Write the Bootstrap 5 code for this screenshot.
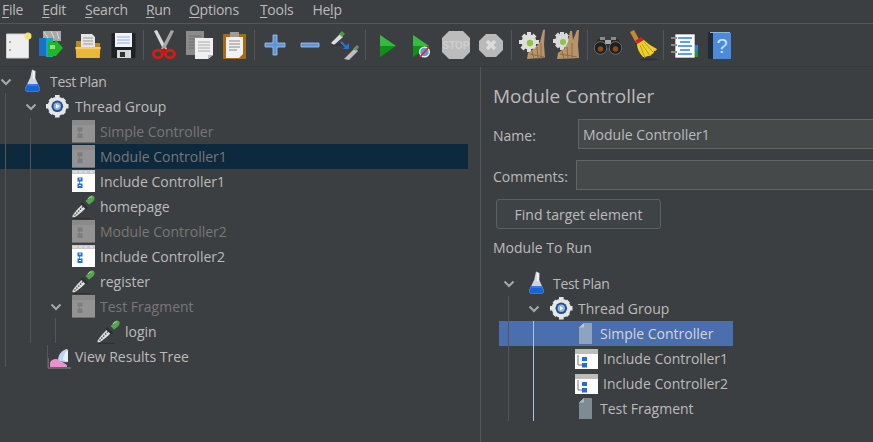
<!DOCTYPE html>
<html lang="en"><head><meta charset="utf-8"><title>JMeter</title>
<link href="https://cdn.jsdelivr.net/npm/bootstrap@5.3.0/dist/css/bootstrap.min.css" rel="stylesheet">
<style>
html,body{width:873px;height:442px;overflow:hidden;background:#3c3f41}
body{font-family:"Open Sans","Noto Sans",sans-serif;font-size:14px;color:#bbb;line-height:20px}
.menubar{height:24px;border-bottom:1px solid #555;padding-left:2px;padding-bottom:3px;font-size:14px;align-items:center;letter-spacing:-.25px}
.menubar span{margin-right:19px}
.menubar span.mid{margin-right:18px}
.menubar span.wide{margin-right:21px}
.menubar u{text-underline-offset:2px}
.toolrow{height:43px;align-items:center;border-bottom:1px solid #353739}
.tbtn{width:35px;height:32px;display:flex;align-items:center;justify-content:center}
.tbtn svg{width:32px;height:32px}
.tsep{width:6px;height:30px;display:flex;justify-content:center}
.tsep::before{content:"";width:1px;background:#555}
.mainarea{height:375px}
.leftpane{width:468px;padding-top:2px;position:relative}
.splitter{width:13px;border-right:1px solid #555}
.rightpane{width:392px;overflow:hidden;padding-left:12px;position:relative}
.trow{height:25px;display:flex;align-items:center;white-space:nowrap;letter-spacing:0;color:#bbb}
.trow.off{color:#777}
.trow.cur{background:#0d293e}
.trow.sel{background:#4b6eaf;color:#d6d6d6}
.squeeze{letter-spacing:-.3px}
.chev{width:12px;height:8px;flex:none}
.ticon{width:25px;height:25px;flex:none}
.gap-after{margin-right:4px}
.gline{position:absolute;width:1px;background:#555}
.gline.pale{background:#a9c4e8}
.paneltitle{font-size:19px;line-height:24px;margin-top:17px}
.fieldrow{display:flex;align-items:center}
.fieldrow label{flex:none;padding-top:3px}
.fieldbox{height:30px;flex:none;width:340px;background:#45494a;border:1px solid #646464;border-radius:0;color:#bbb;font-size:14px;padding:0 4px;box-shadow:none}
.fieldbox:focus{background:#45494a;color:#bbb;border-color:#646464;box-shadow:none}
.findbtn{width:165px;height:30px;margin-left:3px;background:#3e4345;border:1px solid #5e6060;border-radius:3px;color:#bbb;font-size:14px;padding:1px 0 0;line-height:28px}
.findbtn:hover{background:#3e4345;color:#bbb;border-color:#5e6060}
.righttree{position:relative;margin-left:6px;width:234px;margin-top:13px}
</style></head>
<body>
<svg width="0" height="0" class="position-absolute">
<defs>
<symbol id="i-flask" viewBox="0 0 25 25"><path d="M12 .5l3.500 1.500-.2 7 4.400 10c.7 1.900-.2 3.500-2 3.500H7.300c-1.800 0-2.700-1.600-2-3.500l5-10.500z" fill="#cfd6dd"/><path d="M12.800 1.500l2 .8-.2 8h-1.800z" fill="#f4f6f8"/><path d="M7.500 15h10l2.200 4.200c.7 1.900-.2 3.300-2 3.300H7.300c-1.800 0-2.700-1.400-2-3.300z" fill="#1565d8"/><path d="M8 16h9" stroke="#4f95ee"/></symbol>
<symbol id="i-gear" viewBox="0 0 25 25"><g fill="#e4e6e8"><circle cx="12.300" cy="12.300" r="9.500"/><path d="M10 1h4.600v5H10zM10 18.500h4.600v5H10zM1 10h5v4.600H1zM18.500 10h5v4.600h-5z"/><path d="M3.500 6.500l3-3 4 4-3 3zM18 3.500l3 3-4 4-3-3zM3.500 18l3 3 4-4-3-3zM21 18l-3 3-4-4 3-3z"/></g><circle cx="12.300" cy="12.300" r="5.800" fill="#23508f"/><circle cx="12.300" cy="12.300" r="3.700" fill="#8fb3dc"/><path d="M11 10l3.500 2.300L11 14.600z" fill="#fff"/></symbol>
<symbol id="i-ctl" viewBox="0 0 25 25"><rect x="1" y="1" width="23" height="22" fill="#fff"/><rect x="1" y="1" width="23" height="4" fill="#c9c9c9"/><path d="M2 3h4M8 3h3M13 3h3M19 3h3" stroke="#eee"/><path d="M8.500 10v8h2" fill="none" stroke="#8b8b8b"/><rect x="6.500" y="8.500" width="5" height="4" fill="#1f6fd6"/><rect x="6.500" y="14.500" width="5" height="4.500" fill="#1f6fd6"/><rect x="8" y="9.500" width="2" height="1" fill="#fff"/><rect x="8" y="16" width="2" height="1" fill="#fff"/></symbol>
<symbol id="i-ctl2" viewBox="0 0 25 25"><rect x="1" y="3" width="23" height="20" fill="#fff"/><rect x="1" y="3" width="23" height="5" fill="#bcbcbc"/><path d="M4 9v10h5" fill="none" stroke="#777"/><rect x="8" y="11" width="5" height="4" fill="#1f6fd6"/><rect x="8" y="17" width="5" height="4.500" fill="#1f6fd6"/></symbol>
<symbol id="i-ctl-off" viewBox="0 0 25 25"><rect x="1" y="1" width="23" height="22" fill="#939393"/><rect x="1" y="1" width="23" height="5" fill="#8a8a8a"/><path d="M1 23h23v1H1z" fill="#6e6e6e"/><path d="M8.500 10v8h2" fill="none" stroke="#808080"/><rect x="6.500" y="8.500" width="5" height="4" fill="#7c7c7c"/><rect x="6.500" y="14.500" width="5" height="4.500" fill="#7c7c7c"/></symbol>
<symbol id="i-drop" viewBox="0 0 25 25"><path d="M1.500 23c-.6-1.500 3-5.800 9.500-12.500l3.700 3.700C8 20.600 3 24.300 1.500 23z" fill="#dfe2e2"/><path d="M3.500 21.500L12 12.500" stroke="#444" stroke-width="1.300" stroke-dasharray="1.500 1.200"/><path d="M11 8l6 6-2 1.500-5.500-5.500z" fill="#2e2e2e"/><path d="M14.500 7c1.500-1 2-2.500 3.500-4 1.500-1.500 3.500-2 5-.8 1.200 1.400.6 3.500-.8 5-1.500 1.500-3 2-4 3.500z" fill="#58a44e"/><path d="M17 5c1-1.500 3-2.500 4-2" stroke="#a6d69e" fill="none"/><path d="M2 24.500h17" stroke="#2b2b2b" stroke-width="1.200" opacity=".7"/></symbol>
<symbol id="i-results" viewBox="0 0 25 25"><path d="M3 23v-4.500c1-2.500 4-4 6.500-3.500l4.500 2 6 4v2z" fill="#ee8fd0"/><path d="M11 16c0-5 4-10 9-11 1 .1 1 2 1 4v9c-3 .5-7-.3-10-2z" fill="#bcd4ef"/><path d="M16 16c0-4 2-8 5-10v12z" fill="#e6f0fa"/><path d="M1 24h23" stroke="#8a8a8a"/><path d="M1.500 14v10" stroke="#666"/></symbol>
<symbol id="i-file" viewBox="0 0 25 25"><path d="M4 6.500L9 2h8v21H4z" fill="#7f8b93"/><path d="M4 6.500h5V2z" fill="#aeb7bd"/></symbol>
<symbol id="i-file-sel" viewBox="0 0 25 25"><path d="M4 6.500L9 2h8v21H4z" fill="#8ea3bd"/><path d="M4 6.500h5V2z" fill="#b9c6d6"/></symbol>
<symbol id="t-new" viewBox="0 0 32 32"><rect x="4.500" y="5" width="22" height="24" fill="#efefef"/><path d="M4.500 5h22v24h-22z" fill="none" stroke="#ccc"/><circle cx="26" cy="7" r="3.500" fill="#f3e46b"/><circle cx="8" cy="13" r="1" fill="#999"/><circle cx="8" cy="21" r="1" fill="#999"/></symbol>
<symbol id="t-tpl" viewBox="0 0 32 32"><path d="M6 2h18v10H6z" fill="#a7a9ab"/><path d="M7 3l4 6M14 2l3 7M20 3l2 7" stroke="#ddd"/><path d="M2 9h9v18H2z" fill="#1b70c8"/><path d="M9 9h7v19H9z" fill="#12a9c5"/><path d="M11 13h7l1-2 7 8-7 8h-8z" fill="#22b626"/><path d="M13 16h5v4h-5z" fill="#8be08a"/></symbol>
<symbol id="t-open" viewBox="0 0 32 32"><path d="M4 12h7l2 2h15v15H4z" fill="#b98a1d"/><path d="M9 5h11l3 3v10H9z" fill="#e6e6e6"/><path d="M11 9h10M11 12h10M11 15h10" stroke="#999"/><path d="M3.500 18h25l-1 11h-23z" fill="#edb73a"/><path d="M3.500 18h25v2h-25z" fill="#f4cd6b"/></symbol>
<symbol id="t-save" viewBox="0 0 32 32"><path d="M4.500 4h24v25h-24z" fill="#1f2224"/><path d="M8 4h17v14H8z" fill="#f0f3f7"/><path d="M10 8h13M10 11h13M10 14h13" stroke="#8fb4dd"/><path d="M10 21h14v8H10z" fill="#d7d7d7"/><path d="M13 23h5v5h-5z" fill="#333"/></symbol>
<symbol id="t-cut" viewBox="0 0 32 32"><path d="M6 2l3-1 10 19-3 2z" fill="#d8d8d8"/><path d="M26 2l-3-1-10 19 3 2z" fill="#a5a5a5"/><ellipse cx="10" cy="25" rx="4.500" ry="3.800" fill="none" stroke="#d51a1a" stroke-width="3"/><ellipse cx="22" cy="25" rx="4.500" ry="3.800" fill="none" stroke="#d51a1a" stroke-width="3"/><path d="M13 21l3-2 3 2-3 3z" fill="#c11"/></symbol>
<symbol id="t-copy" viewBox="0 0 32 32"><path d="M3 2h18v24H3z" fill="#8b8b8b"/><path d="M6 7h12M6 10h12M6 13h5M6 16h5M6 19h5" stroke="#6f6f6f"/><path d="M12 9h18v17l-5 4H12z" fill="#efefef"/><path d="M15 13h12M15 16h12M15 19h12M15 22h12" stroke="#aaa"/><path d="M25 30v-4h5z" fill="#bbb"/></symbol>
<symbol id="t-paste" viewBox="0 0 32 32"><rect x="5" y="5" width="23" height="25" rx="1" fill="#a66a1d"/><path d="M8 8h17v17l-4 4H8z" fill="#f1f1f1"/><rect x="12" y="3" width="9" height="5" fill="#9d9d9d"/><path d="M11 12h11M11 15h11M11 18h11M11 21h8" stroke="#888"/></symbol>
<symbol id="t-plus" viewBox="0 0 32 32"><path d="M14 6h4v8h8v4h-8v8h-4v-8H6v-4h8z" fill="#5f95d8" stroke="#a7c8ef" stroke-width=".8"/></symbol>
<symbol id="t-minus" viewBox="0 0 32 32"><path d="M7 14h18v4H7z" fill="#5f95d8" stroke="#a7c8ef" stroke-width=".8"/></symbol>
<symbol id="t-toggle" viewBox="0 0 32 32"><path d="M2 14l9-9 3 3-9 8z" fill="#ddd"/><path d="M10 5l3-3 3 3-3 3z" fill="#4f9a4a"/><path d="M3 16h11" stroke="#222" opacity=".6"/><path d="M12 13l6 6" stroke="#2277dd" stroke-width="2"/><path d="M20 14v6h-6z" fill="#2277dd"/><path d="M15 30l11-11 3 3-9 9z" fill="#bfbfbf"/><path d="M24 20l4-4 2 2-3 4z" fill="#6d8f68"/></symbol>
<symbol id="t-start" viewBox="0 0 32 32"><path d="M10 6l16 11-16 11z" fill="#0a9414"/><path d="M10 6l16 11H10z" fill="#38b93f"/></symbol>
<symbol id="t-startn" viewBox="0 0 32 32"><path d="M8 6l16 11L8 28z" fill="#0a9414"/><path d="M8 6l16 11H8z" fill="#38b93f"/><circle cx="19.500" cy="23" r="5.500" fill="#fff"/><circle cx="19.500" cy="23" r="4.300" fill="#5a9be0"/><path d="M15 28l9-10" stroke="#e22" stroke-width="1.800"/></symbol>
<symbol id="t-stop" viewBox="0 0 32 32"><path d="M9 2h14l7 7v14l-7 7H9l-7-7V9z" fill="#bcbcbc"/><text x="16" y="20" font-size="10" font-family="Liberation Sans" font-weight="700" text-anchor="middle" fill="#cfcfcf">STOP</text></symbol>
<symbol id="t-shut" viewBox="0 0 32 32"><path d="M11 5h10l7 7v9l-7 7H11l-7-7v-9z" fill="#b9b9b9"/><path d="M12 12l8 8M20 12l-8 8" stroke="#dcdcdc" stroke-width="3.500"/></symbol>
<symbol id="t-clear" viewBox="0 0 32 32"><g fill="#dedede"><circle cx="13" cy="13" r="7.500"/><path d="M11 3h4v20h-4zM3 11h20v4H3zM5.500 7.500l3-3 13 14-3 3zM20.500 7.500l-3-3-13 14 3 3z"/></g><circle cx="14" cy="14" r="3.200" fill="#8cc63f"/><path d="M11 30l1-6 7-5 5-6 3-12 2-.5-1 15 1 13z" fill="#b8946a"/><path d="M14 25l14 3M16 22l2 8M21 18l1 12M25 14l0 16" stroke="#8c6b44"/></symbol>
<symbol id="t-cleara" viewBox="0 0 32 32"><g fill="#d9d9d9"><circle cx="11" cy="12" r="7"/><path d="M9 3h4v18H9zM2 10h18v4H2zM4 6.500l3-3 12 13-3 3zM18 6.500l-3-3-11 13 3 3z"/></g><circle cx="12" cy="13" r="3" fill="#8cc63f"/><path d="M6 30l1-6 7-5 3-6 2-11 2 0 1 9 4-10 2 0-1 15 1 13z" fill="#b8946a"/><path d="M9 25l17 3M11 22l2 8M16 18l1 12M21 14l0 16" stroke="#8c6b44"/></symbol>
<symbol id="t-bino" viewBox="0 0 32 32"><path d="M6 10h7v4h6v-4h7l5 9H1z" fill="#2c2c2c"/><path d="M8 8h5v3H8zM19 8h5v3h-5z" fill="#8a8a8a"/><path d="M13 11h6v4h-6z" fill="#aaa"/><circle cx="8.500" cy="19" r="6.300" fill="#1f1f1f" stroke="#6a6a6a"/><circle cx="23.500" cy="19" r="6.300" fill="#1f1f1f" stroke="#6a6a6a"/><circle cx="8.500" cy="20" r="2.800" fill="#8a4a1a"/><circle cx="23.500" cy="20" r="2.800" fill="#8a4a1a"/></symbol>
<symbol id="t-broom" viewBox="0 0 32 32"><path d="M3 3l4-2 6 11-4 2z" fill="#c5882f"/><path d="M8 12l6-4 3 3-6 4z" fill="#d81e1e"/><path d="M10 15l7-4c4 4 9 7 13 9-1 2-2 2-3 2 0 2-1 3-2 3-1 2-3 2-4 2-2 1-4 1-5 1-4-4-6-9-6-13z" fill="#ecd12a"/><path d="M13 16l5 13M15 15l8 12M17 13l9 10" stroke="#c79d10"/><ellipse cx="22" cy="30.500" rx="9" ry="1.200" fill="#222" opacity=".5"/></symbol>
<symbol id="t-func" viewBox="0 0 32 32"><path d="M7 5h20v24H7z" fill="#fff" stroke="#333" stroke-width=".6"/><path d="M10 9h14M12 13h10M10 17h14M12 21h10M10 25h14" stroke="#2c7fe0" stroke-width="1.400"/><path d="M3 9h6M3 16h6M3 23h6" stroke="#8a8a8a" stroke-width="2"/><path d="M27 16h3v6h-3z" fill="#2f7fd8"/><path d="M27 22h3v6h-3z" fill="#1f9a2b"/></symbol>
<symbol id="t-help" viewBox="0 0 32 32"><rect x="5" y="3" width="6" height="27" fill="#1e2a36"/><rect x="10" y="4" width="18" height="26" fill="#4c8bd8"/><path d="M7 3.500h20" stroke="#8fb5e2"/><text x="19" y="24" font-size="20" font-family="Liberation Sans" text-anchor="middle" fill="#cfe2f7">?</text></symbol>
<symbol id="chevdown" viewBox="0 0 12 8"><path d="M1.500 1.500L6 6l4.500-4.500" fill="none" stroke="#a6a8aa" stroke-width="2"/></symbol>
</defs></svg>

<div class="d-flex menubar"><span><u>F</u>ile</span><span><u>E</u>dit</span><span class="mid"><u>S</u>earch</span><span class="mid"><u>R</u>un</span><span class="wide"><u>O</u>ptions</span><span><u>T</u>ools</span><span>He<u>l</u>p</span></div>

<div class="d-flex toolrow">
<div class="tbtn"><svg><use href="#t-new"/></svg></div><div class="tbtn"><svg><use href="#t-tpl"/></svg></div><div class="tbtn"><svg><use href="#t-open"/></svg></div><div class="tbtn"><svg><use href="#t-save"/></svg></div><div class="tsep"></div>
<div class="tbtn"><svg><use href="#t-cut"/></svg></div><div class="tbtn"><svg><use href="#t-copy"/></svg></div><div class="tbtn"><svg><use href="#t-paste"/></svg></div><div class="tsep"></div>
<div class="tbtn"><svg><use href="#t-plus"/></svg></div><div class="tbtn"><svg><use href="#t-minus"/></svg></div><div class="tbtn"><svg><use href="#t-toggle"/></svg></div><div class="tsep"></div>
<div class="tbtn"><svg><use href="#t-start"/></svg></div><div class="tbtn"><svg><use href="#t-startn"/></svg></div><div class="tbtn"><svg><use href="#t-stop"/></svg></div><div class="tbtn"><svg><use href="#t-shut"/></svg></div><div class="tsep"></div>
<div class="tbtn"><svg><use href="#t-clear"/></svg></div><div class="tbtn"><svg><use href="#t-cleara"/></svg></div><div class="tsep"></div>
<div class="tbtn"><svg><use href="#t-bino"/></svg></div><div class="tbtn"><svg><use href="#t-broom"/></svg></div><div class="tsep"></div>
<div class="tbtn"><svg><use href="#t-func"/></svg></div><div class="tbtn"><svg><use href="#t-help"/></svg></div>
</div>

<div class="d-flex mainarea">
<div class="leftpane">
<div class="gline" style="left:5px;top:26px;height:274px"></div>
<div class="gline" style="left:30px;top:51px;height:225px"></div>
<div class="gline" style="left:55px;top:251px;height:25px"></div>
<div class="gline" style="left:47px;top:278px;height:23px"></div>

<div class="trow"><svg class="chev"><use href="#chevdown"/></svg><svg class="ticon ms-2 gap-after"><use href="#i-flask"/></svg><span class="squeeze" style="margin-left:1px">Test Plan</span></div>
<div class="trow" style="padding-left:25px"><svg class="chev"><use href="#chevdown"/></svg><svg class="ticon ms-2 gap-after"><use href="#i-gear"/></svg><span style="margin-left:1px">Thread Group</span></div>
<div class="trow off" style="padding-left:71px"><svg class="ticon gap-after"><use href="#i-ctl-off"/></svg>Simple Controller</div>
<div class="trow off cur" style="padding-left:71px"><svg class="ticon gap-after"><use href="#i-ctl-off"/></svg>Module Controller1</div>
<div class="trow" style="padding-left:71px"><svg class="ticon gap-after"><use href="#i-ctl"/></svg>Include Controller1</div>
<div class="trow" style="padding-left:71px"><svg class="ticon gap-after"><use href="#i-drop"/></svg>homepage</div>
<div class="trow off" style="padding-left:71px"><svg class="ticon gap-after"><use href="#i-ctl-off"/></svg>Module Controller2</div>
<div class="trow" style="padding-left:71px"><svg class="ticon gap-after"><use href="#i-ctl"/></svg>Include Controller2</div>
<div class="trow" style="padding-left:71px"><svg class="ticon gap-after"><use href="#i-drop"/></svg>register</div>
<div class="trow off" style="padding-left:50px"><svg class="chev" style="margin-right:9px"><use href="#chevdown"/></svg><svg class="ticon gap-after"><use href="#i-ctl-off"/></svg>Test Fragment</div>
<div class="trow" style="padding-left:96px"><svg class="ticon gap-after"><use href="#i-drop"/></svg>login</div>
<div class="trow" style="padding-left:47px"><svg class="ticon" style="margin-right:3px"><use href="#i-results"/></svg>View Results Tree</div>
</div>
<div class="splitter"></div>
<div class="rightpane">
<div class="paneltitle">Module Controller</div>
<div class="fieldrow" style="margin-top:11px"><label for="nm" style="width:85px">Name:</label><input id="nm" class="form-control fieldbox" value="Module Controller1"></div>
<div class="fieldrow" style="margin-top:11px"><label for="cm" style="width:83px">Comments:</label><input id="cm" class="form-control fieldbox"></div>
<div style="margin-top:9px"><button class="btn findbtn" type="button">Find target element</button></div>
<div style="margin-top:9px">Module To Run</div>
<div class="righttree">
<div class="gline" style="left:9px;top:25px;height:125px"></div>
<div class="gline pale" style="left:34px;top:50px;height:100px;z-index:1"></div>
<div class="trow" style="padding-left:4px"><svg class="chev" style="margin-right:9px"><use href="#chevdown"/></svg><svg class="ticon gap-after"><use href="#i-flask"/></svg><span class="squeeze">Test Plan</span></div>
<div class="trow" style="padding-left:29px"><svg class="chev" style="margin-right:9px"><use href="#chevdown"/></svg><svg class="ticon gap-after"><use href="#i-gear"/></svg>Thread Group</div>
<div class="trow sel" style="padding-left:76px"><svg class="ticon"><use href="#i-file-sel"/></svg>Simple Controller</div>
<div class="trow" style="padding-left:75px"><svg class="ticon gap-after"><use href="#i-ctl2"/></svg>Include Controller1</div>
<div class="trow" style="padding-left:75px"><svg class="ticon gap-after"><use href="#i-ctl2"/></svg>Include Controller2</div>
<div class="trow" style="padding-left:76px"><svg class="ticon"><use href="#i-file"/></svg>Test Fragment</div>
</div>
</div>
</div>
<script src="https://cdn.jsdelivr.net/npm/bootstrap@5.3.0/dist/js/bootstrap.bundle.min.js"></script>
</body></html>
